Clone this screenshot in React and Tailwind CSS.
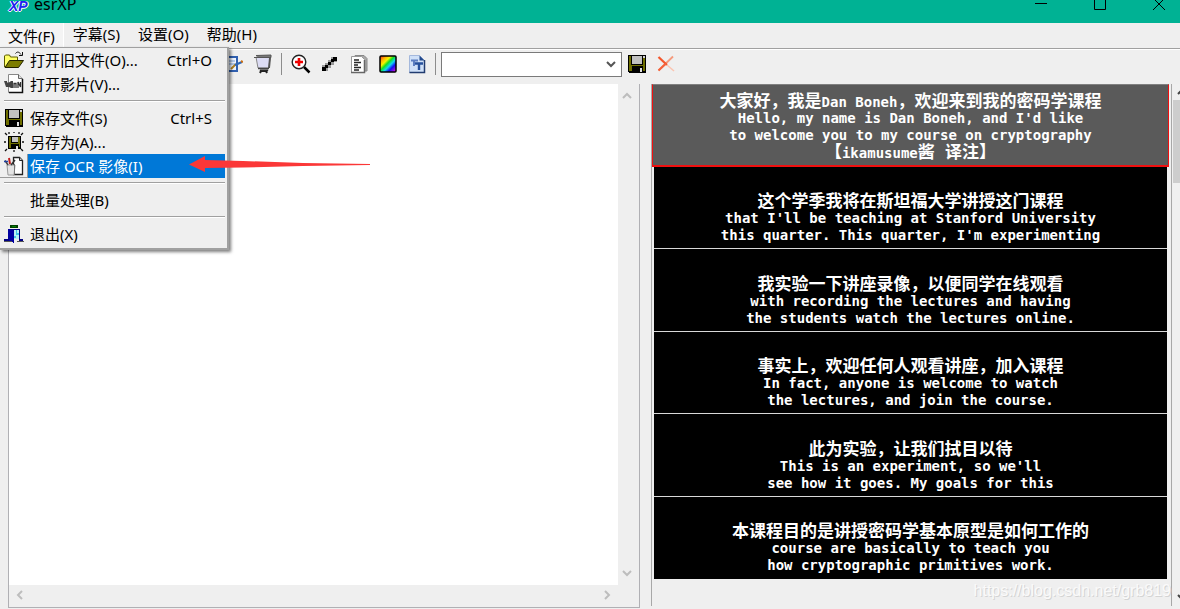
import clsx from 'clsx';

const OpenIcon = () => (
    <svg width="20" height="18" viewBox="0 0 20 18" aria-hidden="true">
        <path d="M.5 16V5l1-1h4l1 2h7v3" fill="#ffff66" stroke="#5a5a00" />
        <path d="M1 16.500 5.500 9.500h14L14.500 16.500z" fill="#7d7d00" stroke="#222200" />
        <path d="M11.500 2.500c1.500-2 3.500-2 5.500 1M18.500 1v3.500H15" fill="none" stroke="#111" />
    </svg>
);

const VideoIcon = () => (
    <svg width="20" height="20" viewBox="0 0 20 20" aria-hidden="true">
        <path d="M4.500.5h10l4 4v14h-14z" fill="#fff" stroke="#888" />
        <path d="M14.500.5v4h4" fill="#ddd" stroke="#666" />
        <path d="M0 7h3v1.500h2L7 7h2v7H7l-2-1H2l-1-3z" fill="#444" />
        <path d="M10 14V9.500h2V14M14 14V8l2.500 5V8" fill="none" stroke="#333" strokeWidth="1.300" />
        <path d="M5 18.500h13.500V5" fill="none" stroke="#111" strokeWidth="1.500" />
    </svg>
);

const SaveIcon = () => (
    <svg width="18" height="18" viewBox="0 0 18 18" shapeRendering="crispEdges" aria-hidden="true">
        <path d="M0 0h18v18H1l-1-1z" fill="#000" />
        <path d="M1 1h2v9h12V3h2v13h-2v-5H4v5H1z" fill="#6f6f00" />
        <path d="M4 1h10v8H4z" fill="#c0c0c0" />
        <path d="M15 1h2v2h-2z" fill="#d0d0d0" />
        <path d="M12 13h2v4h-2z" fill="#e0e0e0" />
    </svg>
);

const SaveAsIcon = () => (
    <svg width="20" height="20" viewBox="0 0 20 20" aria-hidden="true">
        <path d="M1 1l2 2M5 0v2M15 0v2M19 1l-2 2M0 10h2M18 10h2M1 19l2-2M19 19l-2-2M10 18v2M10 0v1" stroke="#111" strokeWidth="1.300" />
        <g transform="translate(4 4)" shapeRendering="crispEdges">
            <path d="M0 0h13v13H0z" fill="#000" />
            <path d="M1 1h2v6h7V1h2v10h-1V8H3v4H1z" fill="#6f6f00" />
            <path d="M4 1h6v5H4z" fill="#c0c0c0" />
            <path d="M8 10h2v3H8z" fill="#ddd" />
        </g>
    </svg>
);

const OcrIcon = () => (
    <svg width="20" height="20" viewBox="0 0 20 20" aria-hidden="true">
        <path d="M9.500 1.500h6l3 3v14h-9z" fill="#fff" stroke="#222" strokeWidth="1.300" />
        <path d="M15.500 1.500v3h3" fill="#ccc" stroke="#222" />
        <path d="M3 9h8l-1 10H4z" fill="#e4e4e4" stroke="#999" />
        <path d="M10.500 8v10" stroke="#777" />
        <path d="M4 9 1 4.500" stroke="#444" strokeWidth="1.500" />
        <path d="M6 8 5 2" stroke="#c02020" strokeWidth="2" />
        <path d="M7 9l4-5" stroke="#333" strokeWidth="1.500" />
        <path d="M0 5.500h4" stroke="#2040a0" strokeWidth="1.500" />
    </svg>
);

const ExitIcon = () => (
    <svg width="20" height="20" viewBox="0 0 20 20" shapeRendering="crispEdges" aria-hidden="true">
        <path d="M6 1h8v3H6z" fill="#004000" />
        <path d="M8 2h4v1H8z" fill="#008000" />
        <path d="M4 5h12v10H4z" fill="#000080" />
        <path d="M10 6h5v9h-5z" fill="#b8f4f4" />
        <path d="M12 6h1v3h2v2h-3v3h-2v-2h2z" fill="#40c8e8" />
        <path d="M4 5l6 2v12l-6-3z" fill="#0000a0" />
        <path d="M0 15h5v2H0zM15 15h4v2h-4z" fill="#000080" />
        <path d="M0 17h8v1H0zM13 17h7v1h-7z" fill="#555" />
    </svg>
);

const NotesIcon = () => (
    <svg width="18" height="18" viewBox="0 0 18 18" aria-hidden="true">
        <path d="M1 2h11v14H1z" fill="#eef4ff" stroke="#3060b0" strokeWidth="2" />
        <path d="M3 6h7M3 9h7" stroke="#7aa0d8" />
        <path d="M6 14l5-5" stroke="#b08020" strokeWidth="2" />
        <path d="M10 10l7-3" stroke="#2c66b8" strokeWidth="2" />
        <path d="M16 6l2 1" stroke="#d07010" strokeWidth="2" />
    </svg>
);

const ProjectorIcon = () => (
    <svg width="20" height="20" viewBox="0 0 20 20" aria-hidden="true">
        <path d="M3 3h14l-1 11H5z" fill="#dcdcf4" stroke="#888" />
        <path d="M1 3.500h4M3 1.500 18 1v2.500H5" fill="#777" stroke="#555" />
        <path d="M17 4l-1 10" stroke="#555" strokeWidth="2" />
        <path d="M5 14.500h11" stroke="#444" strokeWidth="1.500" />
        <path d="M7 16h8l-1 1.500H8z" fill="#333" stroke="#222" />
        <path d="M8 17l-1 2M13 17l1 2" stroke="#222" strokeWidth="2" />
    </svg>
);

const ZoomIcon = () => (
    <svg width="20" height="20" viewBox="0 0 20 20" aria-hidden="true">
        <path d="M13 13l5.500 5.500" stroke="#000" strokeWidth="2.500" />
        <circle cx="8" cy="8" r="6.800" fill="#fff" stroke="#222" strokeWidth="1.400" />
        <path d="M8 4v8M4 8h8" stroke="#f00000" strokeWidth="2.600" />
    </svg>
);

const LineIcon = () => (
    <svg width="18" height="18" viewBox="0 0 18 18" shapeRendering="crispEdges" aria-hidden="true">
        <path d="M1 10h3v-2h3v-3h3v-3h6v5h-3v3h-3v3h-3v3H1z" fill="#999" />
        <path d="M1 12h4v4H1zM4 10h3v3H4zM7 7h3v3H7zM10 4h3v3h-3zM12 2h4v4h-4z" fill="#000" />
    </svg>
);

const PagesIcon = () => (
    <svg width="20" height="20" viewBox="0 0 20 20" aria-hidden="true">
        <path d="M6 1.500h9l3 3V17H6z" fill="#aaa" stroke="#888" />
        <path d="M2.500 2.500h10l3 3v13h-13z" fill="#fff" stroke="#999" />
        <path d="M15.500 6v12.500H2" fill="none" stroke="#666" strokeWidth="1.500" />
        <path d="M5 6h5M5 8.500h7M5 11h4M5 13.500h7M5 16h5" stroke="#222" strokeWidth="1.300" />
    </svg>
);

const ColorIcon = () => (
    <svg width="18" height="18" viewBox="0 0 18 18" aria-hidden="true">
        <defs>
            <linearGradient id="rainbow" x1="0" y1="0" x2="1" y2="1">
                <stop offset="0" stopColor="#f02020" />
                <stop offset="0.200" stopColor="#ffb000" />
                <stop offset="0.340" stopColor="#f4f400" />
                <stop offset="0.460" stopColor="#10e020" />
                <stop offset="0.600" stopColor="#10d8f0" />
                <stop offset="0.740" stopColor="#1010f0" />
                <stop offset="1" stopColor="#ff10e0" />
            </linearGradient>
        </defs>
        <rect x="1" y="1" width="16" height="16" rx="1" fill="url(#rainbow)" stroke="#000" strokeWidth="1.500" />
    </svg>
);

const FontIcon = () => (
    <svg width="18" height="20" viewBox="0 0 18 20" aria-hidden="true">
        <path d="M1.500 1.500h10l5 5v12h-15z" fill="#cfe0f8" stroke="#a4b8dc" />
        <path d="M11.500 1.500v5h5z" fill="#244a8c" />
        <path d="M16.500 6v12.500h-15" fill="none" stroke="#223c70" strokeWidth="1.500" />
        <path d="M3 6.500h7M6 6.500V12" stroke="#5a7cc0" strokeWidth="2" />
        <path d="M7 9.500h8M11 9.500V16" stroke="#26509c" strokeWidth="2.400" />
    </svg>
);

const DeleteIcon = () => (
    <svg width="18" height="18" viewBox="0 0 18 18" aria-hidden="true">
        <path d="M16 1.500 1.500 15.500" stroke="#f59a7c" strokeWidth="1.800" />
        <path d="M1.500 2 10 10" stroke="#f4562c" strokeWidth="2.200" />
        <path d="M10 10l7 6" stroke="#fbc4b0" strokeWidth="1.500" />
        <path d="M9 8.500 1.500 15.500" stroke="#f4623c" strokeWidth="2" />
    </svg>
);

const Chevron = ({ className }) => (
    <svg width="10" height="8" viewBox="0 0 10 8" className={className} aria-hidden="true">
        <path d="M1 6l4-4 4 4" fill="none" stroke="currentColor" strokeWidth="2" />
    </svg>
);

const fileMenu = [
    { label: '打开旧文件(O)...', shortcut: 'Ctrl+O', icon: OpenIcon },
    { label: '打开影片(V)...', icon: VideoIcon },
    null,
    { label: '保存文件(S)', shortcut: 'Ctrl+S', icon: SaveIcon },
    { label: '另存为(A)...', icon: SaveAsIcon },
    { label: '保存 OCR 影像(I)', icon: OcrIcon, active: true },
    null,
    { label: '批量处理(B)' },
    null,
    { label: '退出(X)', icon: ExitIcon },
];

const subtitles = [
    {
        zh: <>大家好，我是<Latin>Dan Boneh</Latin>，欢迎来到我的密码学课程</>,
        lines: ["Hello, my name is Dan Boneh, and I'd like", 'to welcome you to my course on cryptography'],
        note: <>【<Latin>ikamusume</Latin>酱 译注】</>,
        selected: true,
    },
    { zh: '这个学季我将在斯坦福大学讲授这门课程', lines: ["that I'll be teaching at Stanford University", "this quarter. This quarter, I'm experimenting"] },
    { zh: '我实验一下讲座录像，以便同学在线观看', lines: ['with recording the lectures and having', 'the students watch the lectures online.'] },
    { zh: '事实上，欢迎任何人观看讲座，加入课程', lines: ['In fact, anyone is welcome to watch', 'the lectures, and join the course.'] },
    { zh: '此为实验，让我们拭目以待', lines: ["This is an experiment, so we'll", 'see how it goes. My goals for this'] },
    { zh: '本课程目的是讲授密码学基本原型是如何工作的', lines: ['course are basically to teach you', 'how cryptographic primitives work.'] },
];

function Latin({ children }) {
    return <span className="text-[14px]">{children}</span>;
}

const TitleBar = () => (
    <header className="flex h-[23px] shrink-0 items-start overflow-hidden bg-[#00b294] pl-[9px] pr-[14px]">
        <span className="w-[25px] font-['Liberation_Sans'] text-[14px] leading-3 font-bold text-[#2222ee] italic [text-shadow:1px_0_#fff,-1px_0_#fff,0_1px_#fff]">XP</span>
        <h1 className="flex-1 text-[16px] leading-2">esrXP</h1>
        <div className="flex gap-[45px]">
            <button aria-label="最小化">
                <svg width="14" height="12" viewBox="0 0 14 12"><path d="M1 3.500h12" stroke="#000" /></svg>
            </button>
            <button aria-label="最大化">
                <svg width="14" height="12" viewBox="0 0 14 12"><path d="M1.500-3v12.500h11V-3" fill="none" stroke="#000" /></svg>
            </button>
            <button aria-label="关闭">
                <svg width="14" height="12" viewBox="0 0 14 12"><path d="M1-2l12 12M13-2 1 10" stroke="#000" /></svg>
            </button>
        </div>
    </header>
);

const FileMenu = () => (
    <div role="menu" className="absolute top-6 left-0 z-10 w-[229px] border-t border-r-2 border-b-2 border-[#a0a0a0] bg-[#efefef] pr-0.5 pb-0.5 shadow-[2px_2px_3px_rgba(0,0,0,0.5)]">
        {fileMenu.map((item, i) => item ? (
            <button key={i} role="menuitem" className="flex h-6 w-full items-center text-left">
                <span className={clsx('flex h-6 w-7 shrink-0 items-center justify-center', item.active && 'border-r border-b border-[#999]')}>
                    {item.icon && <item.icon />}
                </span>
                <span className={clsx('flex h-6 flex-1 items-center justify-between pr-[13px] pl-0.5', item.active && 'bg-[#0078d7] text-white')}>
                    <span>{item.label}</span>
                    {item.shortcut && <span>{item.shortcut}</span>}
                </span>
            </button>
        ) : (
            <div key={i} role="separator" className="ml-1 flex h-[10px] items-center">
                <span className="h-0.5 w-full border-t border-b border-t-[#a0a0a0] border-b-white"></span>
            </div>
        ))}
    </div>
);

const MenuBar = () => (
    <nav className="relative flex h-[26px] shrink-0 border-b border-[#a0a0a0]">
        <button className="border-r border-white bg-[#f4f4f4] px-2 leading-6">文件(F)</button>
        {['字幕(S)', '设置(O)', '帮助(H)'].map(name => (
            <button key={name} className="px-[9px] pb-1 leading-5">{name}</button>
        ))}
        <FileMenu />
    </nav>
);

const ToolButton = ({ label, children }) => (
    <button aria-label={label} className="flex w-[29px] shrink-0 items-center justify-center">{children}</button>
);

const Divider = () => <span className="mx-1 h-[22px] w-px shrink-0 bg-[#8c8c8c]"></span>;

const Toolbar = () => (
    <div className="flex h-[35px] shrink-0 items-center border-t border-white pb-1.5 pl-[219px]">
        <ToolButton label="编辑"><NotesIcon /></ToolButton>
        <ToolButton label="播放"><ProjectorIcon /></ToolButton>
        <Divider />
        <ToolButton label="放大"><ZoomIcon /></ToolButton>
        <ToolButton label="画线"><LineIcon /></ToolButton>
        <ToolButton label="文本"><PagesIcon /></ToolButton>
        <ToolButton label="颜色"><ColorIcon /></ToolButton>
        <ToolButton label="字体"><FontIcon /></ToolButton>
        <Divider />
        <div className="relative ml-px w-[181px]">
            <select aria-label="方案" className="block h-[25px] w-full appearance-none border border-[#7a7a7a] bg-white">
                <option></option>
            </select>
            <Chevron className="pointer-events-none absolute top-2 right-1.5 rotate-180 text-[#555]" />
        </div>
        <ToolButton label="保存"><SaveIcon /></ToolButton>
        <ToolButton label="删除"><DeleteIcon /></ToolButton>
    </div>
);

const Editor = () => (
    <section className="mb-px grid min-h-0 grid-cols-[1fr_21px] grid-rows-[1fr_22px] border border-t-0 border-[#b0b0b4] text-[#bdbdbd]">
        <textarea aria-label="字幕文本" className="block resize-none bg-white text-black outline-none"></textarea>
        <div className="flex flex-col items-center justify-between py-2 pr-1">
            <Chevron />
            <Chevron className="rotate-180" />
        </div>
        <div className="flex items-center justify-between px-1.5 pb-0.5">
            <Chevron className="-rotate-90" />
            <Chevron className="rotate-90" />
        </div>
    </section>
);

const SubtitleCard = ({ zh, lines, note, selected }) => (
    <li className={clsx(
        'flex flex-col items-center justify-end pb-1 text-center whitespace-pre text-white',
        selected
            ? 'relative z-[1] border border-b-2 border-[#f01010] border-t-[#808080] bg-[#5a5a5a]'
            : 'mx-0.5 border-b border-[#d8d8d8] bg-black last:border-black'
    )}>
        <p className="h-[17px] text-[17px] leading-[17px]">{zh}</p>
        {lines.map(line => <p key={line} className="h-[17px] text-[14px] leading-[17px]">{line}</p>)}
        {note && <p className="h-[17px] text-[17px] leading-[17px]">{note}</p>}
    </li>
);

const SubtitlePanel = () => (
    <section className="mb-[3px] flex min-h-0 flex-col border-x border-[#a8a8a8]">
        <ul className="mr-0.5 grid basis-[495px] auto-rows-fr font-['DejaVu_Sans_Mono','Noto_Sans_CJK_SC',monospace] font-bold">
            {subtitles.map((item, i) => <SubtitleCard key={i} {...item} />)}
        </ul>
        <p className="text-right font-['Liberation_Sans'] text-[16px] leading-6 text-[#fafafa] [text-shadow:1px_1px_#d4d4d4]">https://blog.csdn.net/grb819</p>
    </section>
);

const PageScroll = () => (
    <div className="flex flex-col items-start overflow-hidden bg-[#f0f0f0] text-[#444]">
        <Chevron className="my-1 ml-1 shrink-0" />
        <div className="h-[83px] w-full bg-[#cdcdcd]"></div>
        <Chevron className="mt-auto mb-2 ml-1 shrink-0 rotate-180" />
    </div>
);

export default function App() {
    return (
        <div className="relative flex h-screen flex-col overflow-hidden bg-[#efefef] font-['Noto_Sans','Noto_Sans_CJK_SC',sans-serif] text-[15px] text-black">
            <TitleBar />
            <MenuBar />
            <Toolbar />
            <main className="grid min-h-0 flex-1 grid-cols-[632fr_11px_521fr_1px_7px] grid-rows-1 pl-2">
                <Editor />
                <span></span>
                <SubtitlePanel />
                <span></span>
                <PageScroll />
            </main>
            <svg className="pointer-events-none absolute top-[155px] left-[189px] z-20" width="182" height="18" viewBox="0 0 182 18" aria-hidden="true">
                <path d="M0 9.500 16 1v4l38 1 60 2 67 1v1l-67 1-60 1.500-38 .5v4z" fill="#fb3737" />
            </svg>
        </div>
    );
}
